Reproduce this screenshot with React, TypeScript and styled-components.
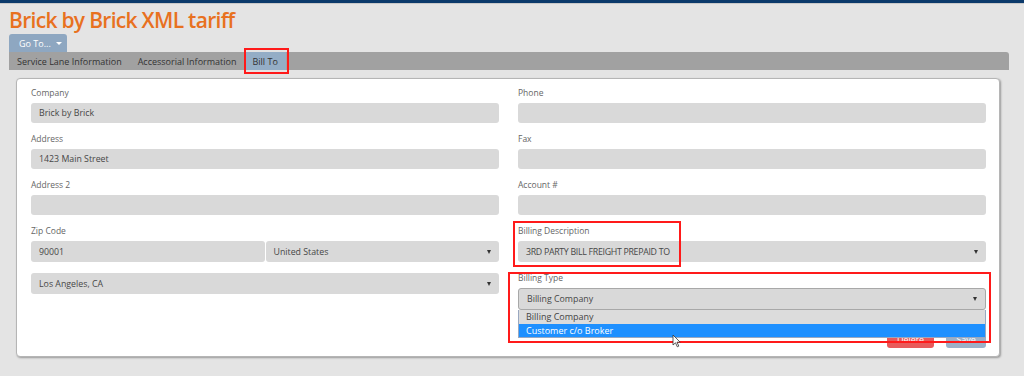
import styled, { createGlobalStyle } from 'styled-components';

const GlobalStyle = createGlobalStyle`
  html, body {
    margin: 0;
    padding: 0;
    background: #e4e4e4;
    font-family: "Open Sans", "Liberation Sans", sans-serif;
  }
`;

const Page = styled.div`
  position: relative;
  width: 1024px;
  height: 376px;
  overflow: hidden;
  background: #e4e4e4;
`;

const TopBar = styled.div`
  height: 3px;
  background: #0b3a6b;
  border-bottom: 1px solid #c9c9c9;
`;

const Header = styled.div`
  padding: 4px 15px 0 9px;
`;

const Title = styled.h1`
  margin: 0;
  color: #e8711f;
  font-size: 21px;
  font-weight: 600;
  line-height: 24px;
  letter-spacing: -0.7px;
`;

const GoTo = styled.button`
  display: flex;
  align-items: center;
  gap: 5px;
  margin-top: 2px;
  height: 18px;
  width: 58px;
  padding: 0 0 0 10px;
  border: none;
  border-radius: 3px 3px 0 0;
  background: #8ea7c1;
  color: #fff;
  font-family: inherit;
  font-size: 9px;
`;

const Caret = styled.span`
  width: 0;
  height: 0;
  border-left: 3px solid transparent;
  border-right: 3px solid transparent;
  border-top: 3px solid #fff;
`;

const TabBar = styled.div`
  display: flex;
  height: 18px;
  background: #a1a1a1;
  border-radius: 0 3px 0 0;
`;

const Tab = styled.div<{ $active?: boolean }>`
  display: flex;
  align-items: center;
  padding: 0 8px;
  font-size: 9px;
  color: #333;
  background: ${({ $active }) => ($active ? '#94adc6' : 'transparent')};
`;

const Panel = styled.div`
  position: relative;
  margin: 8px 24px 0 16px;
  height: 279px;
  box-sizing: border-box;
  background: #fff;
  border: 1px solid #b5b5b5;
  border-radius: 4px;
  box-shadow: 1px 1px 2px #9a9a9a;
  padding: 9px 13px 0 14px;
  display: grid;
  grid-template-columns: 1fr 1fr;
  column-gap: 19px;
`;

const Column = styled.div`
  display: flex;
  flex-direction: column;
`;

const Field = styled.div`
  position: relative;
  display: flex;
  flex-direction: column;
  margin-bottom: 11px;
`;

const Label = styled.div`
  height: 15px;
  line-height: 10px;
  font-size: 8.5px;
  color: #666;
`;

const Input = styled.div<{ $caps?: boolean }>`
  display: flex;
  align-items: center;
  justify-content: space-between;
  height: 20px;
  padding: 0 8px;
  background: #d9d9d9;
  border-radius: 3px;
  font-size: 8.8px;
  letter-spacing: ${({ $caps }) => ($caps ? '-0.3px' : '0')};
  color: #474747;
`;

const SelectBox = styled(Input)<{ $open?: boolean }>`
  height: ${({ $open }) => ($open ? 22 : 21)}px;
  border: ${({ $open }) => ($open ? '1px solid #a8a8a8' : 'none')};
  box-sizing: border-box;
`;

const Arrow = styled.span`
  width: 0;
  height: 0;
  border-left: 2px solid transparent;
  border-right: 2px solid transparent;
  border-top: 4px solid #333;
`;

const Row = styled.div`
  display: flex;
  gap: 1px;
  & > * {
    flex: 1;
  }
`;

const DropList = styled.div`
  position: absolute;
  left: 0;
  right: 0;
  top: 37px;
  z-index: 2;
  border: 1px solid #9aa8c0;
  border-top: none;
  background: #dcdcdc;
  font-size: 9px;
`;

const Option = styled.div<{ $selected?: boolean }>`
  height: 13.5px;
  line-height: 13.5px;
  padding: 0 7px;
  color: ${({ $selected }) => ($selected ? '#fff' : '#444')};
  background: ${({ $selected }) => ($selected ? '#1e90ff' : 'transparent')};
`;

const Actions = styled.div`
  display: flex;
  justify-content: flex-end;
  gap: 12px;
  margin-top: 9px;
`;

const ActionButton = styled.button<{ $tone: 'red' | 'blue' }>`
  height: 18px;
  width: ${({ $tone }) => ($tone === 'red' ? 47 : 40)}px;
  border: none;
  border-radius: 3px;
  color: #fff;
  font-family: inherit;
  font-size: 9px;
  background: ${({ $tone }) => ($tone === 'red' ? '#e85a5a' : '#9cb1c8')};
`;

const Highlight = styled.div`
  position: absolute;
  border: 2px solid #ff1a1a;
  z-index: 3;
  pointer-events: none;
`;

const Cursor = styled.svg`
  position: absolute;
  left: 672px;
  top: 334px;
  z-index: 4;
`;

const leftFields = [
  { label: 'Company', value: 'Brick by Brick' },
  { label: 'Address', value: '1423 Main Street' },
  { label: 'Address 2', value: '' },
];

const rightFields = [
  { label: 'Phone', value: '' },
  { label: 'Fax', value: '' },
  { label: 'Account #', value: '' },
];

export default function App() {
  return (
    <Page>
      <GlobalStyle />
      <TopBar />
      <Header>
        <Title>Brick by Brick XML tariff</Title>
        <GoTo>
          Go To... <Caret />
        </GoTo>
        <TabBar>
          <Tab>Service Lane Information</Tab>
          <Tab>Accessorial Information</Tab>
          <Tab $active>Bill To</Tab>
        </TabBar>
      </Header>
      <Panel>
        <Column>
          {leftFields.map((f) => (
            <Field key={f.label}>
              <Label>{f.label}</Label>
              <Input>{f.value}</Input>
            </Field>
          ))}
          <Field>
            <Label>Zip Code</Label>
            <Row>
              <SelectBox>90001</SelectBox>
              <SelectBox>
                United States <Arrow />
              </SelectBox>
            </Row>
          </Field>
          <SelectBox>
            Los Angeles, CA <Arrow />
          </SelectBox>
        </Column>
        <Column>
          {rightFields.map((f) => (
            <Field key={f.label}>
              <Label>{f.label}</Label>
              <Input>{f.value}</Input>
            </Field>
          ))}
          <Field>
            <Label>Billing Description</Label>
            <SelectBox $caps>
              3RD PARTY BILL FREIGHT PREPAID TO <Arrow />
            </SelectBox>
          </Field>
          <Field>
            <Label>Billing Type</Label>
            <SelectBox $open>
              Billing Company <Arrow />
            </SelectBox>
            <DropList>
              <Option>Billing Company</Option>
              <Option $selected>Customer c/o Broker</Option>
            </DropList>
          </Field>
          <Actions>
            <ActionButton $tone="red">Delete</ActionButton>
            <ActionButton $tone="blue">Save</ActionButton>
          </Actions>
        </Column>
      </Panel>
      <Highlight style={{ left: 244, top: 48, width: 41, height: 22 }} />
      <Highlight style={{ left: 513, top: 221, width: 164, height: 42 }} />
      <Highlight style={{ left: 508, top: 272, width: 479, height: 67 }} />
      <Cursor width="10" height="14" viewBox="0 0 10 14">
        <path d="M1 1 L1 11 L3.5 8.8 L5.3 12.8 L6.8 12.1 L5 8.2 L8.2 8.2 Z" fill="#fff" stroke="#333" strokeWidth="0.8" />
      </Cursor>
    </Page>
  );
}
